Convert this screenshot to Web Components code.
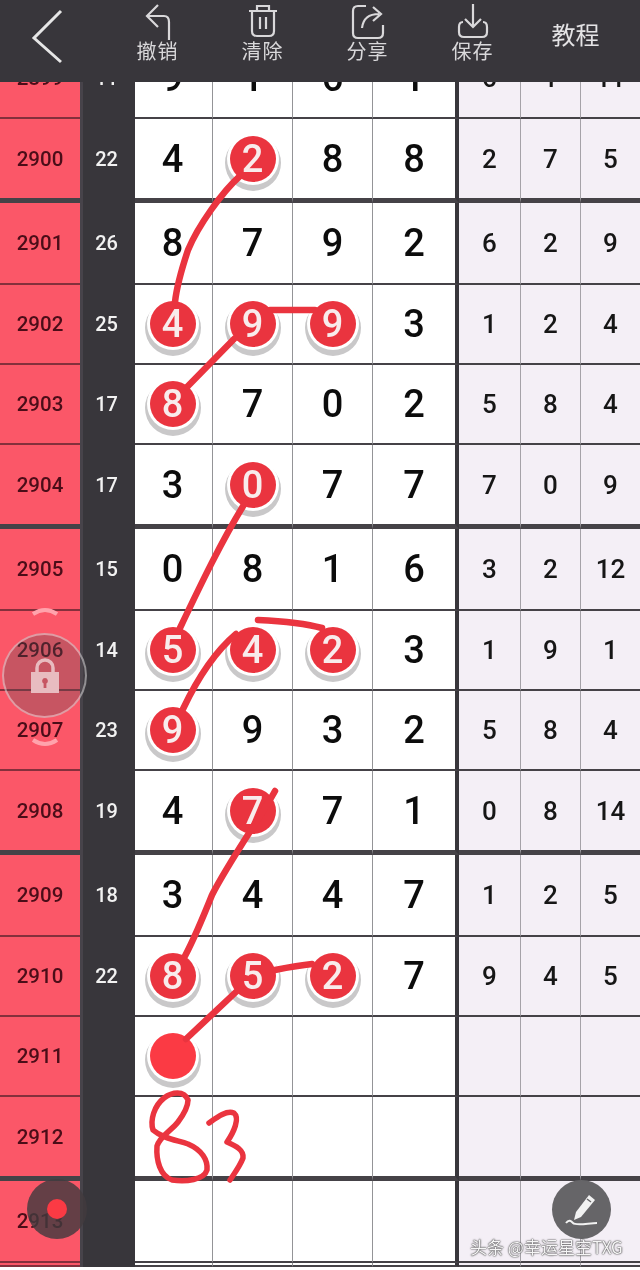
<!DOCTYPE html>
<html>
<head>
  <meta charset="utf-8">
  <title>走势图</title>
  <style>
    html, body { margin: 0; padding: 0; background: #fff; }
    body { width: 640px; height: 1270px; overflow: hidden; font-family: Roboto, "Noto Sans CJK SC", sans-serif; }
  </style>
</head>
<body>
  <template id="tool-button">
    <style>
      :host { display: flex; flex-direction: column; align-items: center; width: 105px; color: #d9d8da; }
      ::slotted(svg) { display: block; width: 40px; height: 40px; }
      span { font: 20px/24px "Noto Sans CJK SC", sans-serif; margin-top: -3px; letter-spacing: 1px; }
    </style>
    <slot name="icon"></slot>
    <span><slot></slot></span>
  </template>

  <template id="top-bar">
    <style>
      :host { display: flex; position: relative; z-index: 3; height: 82px; background: #38363b; align-items: flex-start; padding-top: 2px; box-sizing: border-box; }
      .back { width: 105px; height: 80px; display: flex; }
      .back svg { width: 105px; height: 80px; }
      .text { width: 105px; align-self: center; text-align: center; font: 24px/30px "Noto Sans CJK SC", sans-serif; color: #e4e3e5; margin-top: -16px; margin-left: -2px; }
    </style>
    <div class="back">
      <svg viewBox="0 0 105 80" fill="none" stroke="#e6e6e6" stroke-width="3"><path d="M61 9 L34 36 L61 60"/></svg>
    </div>
    <slot></slot>
    <div class="text">教程</div>
  </template>

  <template id="draw-row">
    <style>
      :host { display: grid; grid-template-columns: 80px 55px 78px 80px 80px 86px 62px 60px 59px; height: var(--h, 80px); font-weight: 500; }
      div { display: flex; align-items: center; justify-content: center; box-sizing: border-box; border-bottom: var(--b, 2px) solid #454247; overflow: visible; }
      .no { background: #fb5768; color: #4b0d18; font-size: 20.5px; border-bottom-color: var(--nb, #84303c); }
      .sum { background: linear-gradient(90deg, #47434a 3px, #38363b 3px); border-bottom-color: transparent; color: #f2f2f2; font-size: 20px; padding-right: 2px; }
      .big { background: #fff; font-size: 38px; color: #0c0c0c; border-right: 1px solid #949497; }
      .big.first { padding-right: 2px; }
      .big.end { border-right: 4px solid #38363b; }
      .small { background: #f4eff6; font-size: 26px; color: #161616; border-right: 1px solid #a5a2a8; }
      .small.end { border-right: 0; }
    </style>
    <div class="no"></div><div class="sum"></div>
    <div class="big first"></div><div class="big"></div><div class="big"></div><div class="big end"></div>
    <div class="small"></div><div class="small"></div><div class="small end"></div>
  </template>

  <template id="draw-ball">
    <style>
      :host { display: block; position: relative; z-index: 1; width: 46px; height: 46px; border-radius: 50%; background: #ea343f; color: #f8ecec; font-size: 38px; font-weight: 500; line-height: 46px; text-align: center; box-shadow: 0 0 0 3px #fff, 0 4px 0 5px #c9c8c9; }
      :host([blank]) { background: #fb3a44; }
    </style>
    <slot></slot>
  </template>

  <template id="float-lock">
    <style>
      :host { display: block; position: absolute; z-index: 2; left: 2px; top: 598px; width: 85px; height: 156px; }
      .ring { position: absolute; left: 0; top: 35px; width: 85px; height: 85px; box-sizing: border-box; border-radius: 50%; border: 2px solid rgba(255,255,255,.42); background: rgba(90,80,86,.32); display: flex; align-items: center; justify-content: center; }
      svg { display: block; }
      .up, .down { position: absolute; left: 30px; }
      .up { top: 8px; }
      .down { bottom: 6px; }
    </style>
    <svg class="up" width="26" height="10" viewBox="0 0 26 10" fill="none" stroke="#ffa3ac" stroke-width="4"><path d="M1 8 Q13 0 25 8"/></svg>
    <div class="ring">
      <svg width="28" height="36" viewBox="0 0 28 36">
        <path d="M6 15 V10 a8 8 0 0 1 16 0 V15" fill="none" stroke="#e8bcc0" stroke-width="3.5"/>
        <path fill-rule="evenodd" d="M0 14 H28 V35 H0 Z M14 20 a3 3 0 0 0 -1.4 5.6 L12.6 30 H15.4 L15.4 25.6 A3 3 0 0 0 14 20 Z" fill="#e8bcc0"/>
      </svg>
    </div>
    <svg class="down" width="26" height="10" viewBox="0 0 26 10" fill="none" stroke="#ffa3ac" stroke-width="4"><path d="M1 2 Q13 10 25 2"/></svg>
  </template>

  <template id="float-record">
    <style>
      :host { display: flex; position: absolute; z-index: 2; left: 27px; top: 1179px; width: 60px; height: 60px; border-radius: 50%; background: rgba(66,58,62,.82); align-items: center; justify-content: center; }
      i { display: block; width: 20px; height: 20px; border-radius: 50%; background: #fb3a44; }
    </style>
    <i></i>
  </template>

  <template id="float-pen">
    <style>
      :host { display: flex; position: absolute; z-index: 2; left: 552px; top: 1180px; width: 59px; height: 59px; border-radius: 50%; background: #666568; align-items: center; justify-content: center; }
    </style>
    <svg width="40" height="40" viewBox="0 0 40 40" fill="none">
      <path d="M27 5 L33 10 L19 27 L12 30 L14 22 Z" fill="#f2f2f2"/>
      <path d="M25 9 L29 12" stroke="#666568" stroke-width="1.4"/>
      <path d="M4 33 C7 29 9 31 11 33 C14 36 27 33 35 33" stroke="#f2f2f2" stroke-width="2"/>
    </svg>
  </template>

  <template id="water-mark">
    <style>
      :host { display: block; position: absolute; z-index: 4; left: 470px; top: 1236px; font: 17px/22px "Noto Sans CJK SC", sans-serif; color: #f5f5f5; white-space: nowrap; text-shadow: 0 0 2px #333, 0 0 1px #222; }
    </style>
    <slot></slot>
  </template>

  <template id="chart-page">
    <style>
      :host { display: block; position: relative; width: 640px; height: 1270px; overflow: hidden; background: #fff; filter: blur(.45px); }
      .clip { height: 1188px; overflow: hidden; }
      .rows { margin-top: -44px; }
      svg.ink { position: absolute; z-index: 1; left: 0; top: 0; width: 640px; height: 1270px; pointer-events: none; }
    </style>
    <slot name="bar"></slot>
    <div class="clip"><div class="rows"><slot name="row"></slot></div></div>
    <svg class="ink" viewBox="0 0 640 1270" fill="none" stroke="#ea343f" stroke-width="6.5" stroke-linecap="round" stroke-linejoin="round">
      <path d="M240 176 C222 192 198 226 188 250 C182 268 177 284 175 302"/>
      <path d="M187 387 L234 339"/>
      <path d="M270 310 L315 310"/>
      <path d="M245 503 C222 540 200 586 180 628"/>
      <path d="M183 709 C192 690 210 656 236 634"/>
      <path d="M258 620 C280 621 304 623 322 628"/>
      <path d="M275 791 C262 815 230 860 212 895 C204 915 196 935 185 956"/>
      <path d="M186 1039 L237 991"/>
      <path d="M275 970 C290 967 302 965 312 964"/>
      <path stroke-width="5.5" d="M188 1100 C184 1090 172 1092 164 1098 C154 1106 150 1120 153 1130 C162 1138 176 1140 188 1144 C202 1150 208 1160 207 1170 C204 1180 186 1182 172 1180 C160 1176 156 1160 157 1146 C160 1136 172 1130 178 1122 C184 1114 188 1106 188 1100"/>
      <path stroke-width="5.5" d="M209 1123 C216 1118 226 1110 234 1113 C240 1118 234 1132 227 1142 C236 1146 244 1150 243 1158 C240 1166 234 1174 230 1180"/>
    </svg>
    <slot></slot>
  </template>

  <script type="module">
    const shadow = (el, id) => el.attachShadow({ mode: 'open' }).appendChild(document.getElementById(id).content.cloneNode(true))

    // elements that only stamp their template
    for (const name of ['tool-button', 'top-bar', 'draw-ball', 'float-lock', 'float-record', 'float-pen', 'water-mark', 'chart-page']) {
      customElements.define(name, class extends HTMLElement {
        constructor() {
          super()
          shadow(this, name)
        }
      })
    }

    customElements.define('draw-row', class extends HTMLElement {
      constructor() {
        super()
        shadow(this, 'draw-row')
      }

      // digits: "*" prefix puts the digit on a ball
      set data({ no, sum, big, small, height, line }) {
        this.style.setProperty('--h', height + 'px')
        this.style.setProperty('--b', line + 'px')
        if (line > 2) this.style.setProperty('--nb', '#454247')
        const cells = this.shadowRoot.querySelectorAll('div')
        cells[0].textContent = no
        cells[1].textContent = sum
        big.forEach((v, i) => {
          if (v[0] === '*') {
            const ball = document.createElement('draw-ball')
            ball.textContent = v.slice(1)
            if (v === '*') ball.setAttribute('blank', '')
            cells[2 + i].appendChild(ball)
          } else {
            cells[2 + i].textContent = v
          }
        })
        small.forEach((v, i) => { cells[6 + i].textContent = v })
      }
    })

    const table = [
      [2899, 11, ['9', '1', '6', '1'], [6, 1, 11]],
      [2900, 22, ['4', '*2', '8', '8'], [2, 7, 5]],
      [2901, 26, ['8', '7', '9', '2'], [6, 2, 9]],
      [2902, 25, ['*4', '*9', '*9', '3'], [1, 2, 4]],
      [2903, 17, ['*8', '7', '0', '2'], [5, 8, 4]],
      [2904, 17, ['3', '*0', '7', '7'], [7, 0, 9]],
      [2905, 15, ['0', '8', '1', '6'], [3, 2, 12]],
      [2906, 14, ['*5', '*4', '*2', '3'], [1, 9, 1]],
      [2907, 23, ['*9', '9', '3', '2'], [5, 8, 4]],
      [2908, 19, ['4', '*7', '7', '1'], [0, 8, 14]],
      [2909, 18, ['3', '4', '4', '7'], [1, 2, 5]],
      [2910, 22, ['*8', '*5', '*2', '7'], [9, 4, 5]],
      [2911, '', ['*', '', '', ''], ['', '', '']],
      [2912, '', ['', '', '', ''], ['', '', '']],
      [2913, '', ['', '', '', ''], ['', '', '']],
      ['', '', ['', '', '', ''], ['', '', '']]
    ]

    const page = document.querySelector('chart-page')
    table.forEach(([no, sum, big, small], i) => {
      const row = document.createElement('draw-row')
      row.slot = 'row'
      // every 4th draw closes a block with a heavy rule, the next row is a bit taller
      const heavy = i % 4 === 1
      let height = heavy ? 84 : (i % 4 === 2 ? 82 : 80)
      if (i === 0) height = 81
      if (i === 15) height = 4
      row.data = { no, sum, big, small, height, line: heavy ? 5 : 2 }
      page.appendChild(row)
    })
  </script>

  <chart-page>
    <top-bar slot="bar">
      <tool-button>
        <svg slot="icon" viewBox="0 0 40 40" fill="none" stroke="#d9d8da" stroke-width="2.2"><path d="M20 3 L9 14 L20 25 M9 14 H26 Q31 14 31 20 V38"/></svg>
        撤销
      </tool-button>
      <tool-button>
        <svg slot="icon" viewBox="0 0 40 40" fill="none" stroke="#d9d8da" stroke-width="2.2"><path d="M6 9 H34 M14 9 V4 H26 V9 M9 9 V29 Q9 34 14 34 H26 Q31 34 31 29 V9 M17 15 V27 M23 15 V27"/></svg>
        清除
      </tool-button>
      <tool-button>
        <svg slot="icon" viewBox="0 0 40 40" fill="none" stroke="#d9d8da" stroke-width="2.2"><path d="M18 4 H10 Q5 4 5 9 V31 Q5 36 10 36 H30 Q35 36 35 31 V23 M14 26 C15 17 21 12 31 12 M25 5 L33 12 L25 19"/></svg>
        分享
      </tool-button>
      <tool-button>
        <svg slot="icon" viewBox="0 0 40 40" fill="none" stroke="#d9d8da" stroke-width="2.2"><path d="M20 2 V25 M12 17 L20 25 L28 17 M10 20 Q6 20 6 25 V30 Q6 35 11 35 H29 Q34 35 34 30 V25 Q34 20 30 20"/></svg>
        保存
      </tool-button>
    </top-bar>
    <float-lock></float-lock>
    <float-record></float-record>
    <float-pen></float-pen>
    <water-mark>头条 @幸运星空TXG</water-mark>
  </chart-page>
</body>
</html>
